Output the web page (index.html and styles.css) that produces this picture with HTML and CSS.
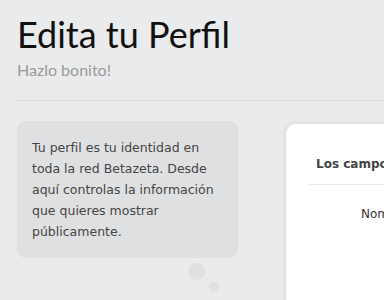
FILE: index.html
```html
<!DOCTYPE html>
<html lang="es">
<head>
  <meta charset="UTF-8" />
  <title>Edita tu Perfil</title>
  <link rel="stylesheet" href="styles.css">
</head>
<body>
  <!-- Header -->
  <header class="page-head">
    <h1>Edita tu Perfil</h1>
    <p class="tagline">Hazlo bonito!</p>
  </header>

  <div class="content">
    <!-- Intro bubble -->
    <aside class="intro">
      <div class="intro-box">
        Tu perfil es tu identidad en toda la red Betazeta. Desde aquí controlas la información que quieres mostrar públicamente.
      </div>
      <span class="dot big"></span>
      <span class="dot small"></span>
    </aside>

    <!-- Form card -->
    <section class="card">
      <div class="card-inner">
        <h2 class="card-title">Los campos marcados son obligatorios</h2>
        <div class="field">
          <label>Nombre</label>
        </div>
      </div>
    </section>
  </div>
</body>
</html>
```

FILE: styles.css
```css
/* ---------- Page ---------- */
body {
  margin: 0;
  background: #e9ebed;
  font-family: "DejaVu Sans", sans-serif;
  overflow: hidden;
}

/* ---------- Header ---------- */
.page-head {
  margin-left: 17px;
  padding-top: 12px;
  padding-bottom: 20px;
  border-bottom: 1px solid #d9dadb;
}
h1 {
  margin: 0;
  font-family: Lato, sans-serif;
  font-weight: 400;
  font-size: 36px;
  line-height: 44px;
  color: #111;
}
.tagline {
  margin: 4px 0 0;
  font-family: Lato, sans-serif;
  font-size: 16px;
  line-height: 20px;
  color: #9a9a9a;
}

/* ---------- Content ---------- */
.content {
  display: flex;
  gap: 45px;
  padding: 20px 0 0 17px;
}

.intro {
  position: relative;
  flex: 0 0 221px;
}
.intro-box {
  background: #dfe0e1;
  border-radius: 9px;
  padding: 16px 15px 16px 15px;
  font-size: 12.5px;
  line-height: 21px;
  color: #454545;
}
.dot {
  position: absolute;
  border-radius: 50%;
  background: #dfe0e1;
}
.dot.big   { width: 17px; height: 17px; left: 171px; top: 142px; }
.dot.small { width: 10px; height: 10px; left: 192px; top: 161px; }

/* ---------- Card ---------- */
.card {
  flex: 1;
  background: #e2e3e4;
  border-radius: 12px 0 0 0;
  padding: 3px 0 0 3px;
  min-height: 200px;
}
.card-inner {
  background: #fff;
  border-radius: 10px 0 0 0;
  min-height: 200px;
  padding: 0 0 0 23px;
}
.card-title {
  margin: 0;
  padding: 33px 0 13px 7px;
  border-bottom: 1px solid #e8e8e8;
  font-size: 12px;
  font-weight: bold;
  color: #444;
  white-space: nowrap;
}
.field {
  padding: 22px 0 0 52px;
  font-size: 12px;
  color: #333;
}
```
